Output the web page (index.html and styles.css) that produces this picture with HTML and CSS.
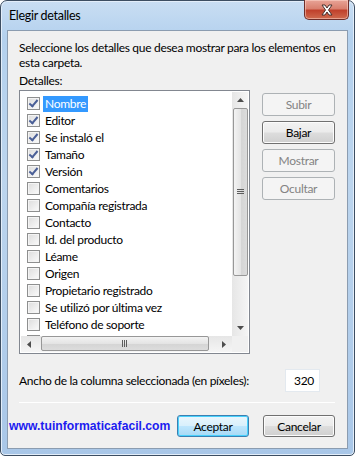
FILE: index.html
```html
<!doctype html>
<html lang="es">
  <head>
    <meta charset="UTF-8" />
    <title>Elegir detalles</title>
    <link rel="stylesheet" href="styles.css">
  </head>
  <body>
    <div class="window">
      <div class="titlebar">
        <span class="title">Elegir detalles</span>
        <div class="close-btn">
          <svg width="14" height="12" viewBox="0 0 14 12">
            <path d="M2 1h3l2 3 2-3h3l-3.5 5 3.5 5h-3l-2-3-2 3h-3l3.5-5z" fill="#ffffff" stroke="#47322f" stroke-width="1" stroke-linejoin="round" />
          </svg>
        </div>
      </div>
      <div class="client">
        <p class="intro">Seleccione los detalles que desea mostrar para los elementos en esta carpeta.</p>
        <div class="label">Detalles:</div>
        <div class="details-row">
          <div class="listbox">
            <div class="list-area">
              <div class="items">
                <div class="item"><span class="check checked"></span><span class="name selected">Nombre</span></div>
                <div class="item"><span class="check checked"></span><span class="name">Editor</span></div>
                <div class="item"><span class="check checked"></span><span class="name">Se instaló el</span></div>
                <div class="item"><span class="check checked"></span><span class="name">Tamaño</span></div>
                <div class="item"><span class="check checked"></span><span class="name">Versión</span></div>
                <div class="item"><span class="check"></span><span class="name">Comentarios</span></div>
                <div class="item"><span class="check"></span><span class="name">Compañía registrada</span></div>
                <div class="item"><span class="check"></span><span class="name">Contacto</span></div>
                <div class="item"><span class="check"></span><span class="name">Id. del producto</span></div>
                <div class="item"><span class="check"></span><span class="name">Léame</span></div>
                <div class="item"><span class="check"></span><span class="name">Origen</span></div>
                <div class="item"><span class="check"></span><span class="name">Propietario registrado</span></div>
                <div class="item"><span class="check"></span><span class="name">Se utilizó por última vez</span></div>
                <div class="item"><span class="check"></span><span class="name">Teléfono de soporte</span></div>
                <div class="item"><span class="check"></span></div>
              </div>
              <div class="vscroll">
                <div class="arrow">
                  <svg width="7" height="4" viewBox="0 0 7 4"><path d="M0 4L3.5 0 7 4z" fill="#4d4d4d" /></svg>
                </div>
                <div class="vtrack">
                  <div class="vthumb">
                    <svg width="7" height="6" viewBox="0 0 7 6"><path d="M0 .5h7M0 2.5h7M0 4.5h7" stroke="#5c5c5c" /></svg>
                  </div>
                </div>
                <div class="arrow">
                  <svg width="7" height="4" viewBox="0 0 7 4"><path d="M0 0L3.5 4 7 0z" fill="#4d4d4d" /></svg>
                </div>
              </div>
            </div>
            <div class="hscroll">
              <div class="harrow">
                <svg width="4" height="7" viewBox="0 0 4 7"><path d="M4 0L0 3.5 4 7z" fill="#4d4d4d" /></svg>
              </div>
              <div class="htrack">
                <div class="hthumb">
                  <svg width="6" height="7" viewBox="0 0 6 7"><path d="M.5 0v7M2.5 0v7M4.5 0v7" stroke="#5c5c5c" /></svg>
                </div>
              </div>
              <div class="harrow">
                <svg width="4" height="7" viewBox="0 0 4 7"><path d="M0 0L4 3.5 0 7z" fill="#4d4d4d" /></svg>
              </div>
              <div class="corner"></div>
            </div>
          </div>
          <div class="side-buttons">
            <button class="btn" disabled>Subir</button>
            <button class="btn">Bajar</button>
            <button class="btn" disabled>Mostrar</button>
            <button class="btn" disabled>Ocultar</button>
          </div>
        </div>
        <div class="width-row">
          <span>Ancho de la columna seleccionada (en píxeles):</span>
          <div class="width-input">320</div>
        </div>
        <div class="separator"></div>
        <div class="footer">
          <span class="site">www.tuinformaticafacil.com</span>
          <button class="btn default">Aceptar</button>
          <button class="btn">Cancelar</button>
        </div>
      </div>
    </div>
  </body>
</html>
```

FILE: styles.css
```css
* {
  margin: 0;
  padding: 0;
  box-sizing: border-box;
}

body {
  width: 355px;
  height: 456px;
  overflow: hidden;
  background: #ffffff;
  font-family: 'Lato', 'Noto Sans', sans-serif;
  font-size: 12px;
  letter-spacing: -0.3px;
  color: #000000;
}

.window {
  width: 355px;
  height: 456px;
  border: 1px solid #3d4e62;
  border-radius: 7px 7px 5px 5px;
  background: linear-gradient(180deg, #c9def3 0%, #b4d1ee 8%, #bcd5ee 40%, #a9c7e8 100%);
  display: flex;
  flex-direction: column;
  box-shadow: inset 0 0 0 1px #e3eefa;
}

.titlebar {
  height: 29px;
  display: flex;
  align-items: flex-start;
  justify-content: space-between;
  padding-left: 8px;
}

.title {
  font-size: 12.5px;
  line-height: 14px;
  margin-top: 8px;
  color: #000000;
}

.close-btn {
  width: 45px;
  height: 20px;
  margin-right: 5px;
  margin-top: -1px;
  border: 1px solid #6e2e2a;
  border-top: none;
  border-radius: 0 0 5px 5px;
  background: linear-gradient(180deg, #e8a497 0%, #d9806f 45%, #c0412c 55%, #cf6a4e 100%);
  box-shadow: inset 0 0 0 1px rgba(255, 220, 210, 0.5);
  display: flex;
  align-items: center;
  justify-content: center;
}

.client {
  flex: 1;
  margin: 0 6px 6px 6px;
  border: 1px solid #8b9cb0;
  background: #f0f0f0;
  padding: 9px 12px 0 11px;
}

.intro {
  line-height: 15px;
  width: 318px;
}

.label {
  margin-top: 3px;
  line-height: 15px;
}

.details-row {
  display: flex;
  gap: 12px;
  margin-top: 2px;
}

.listbox {
  width: 234px;
  height: 264px;
  border: 1px solid #828790;
  background: #ffffff;
  padding: 1px;
  display: flex;
  flex-direction: column;
}

.list-area {
  flex: 1;
  display: flex;
  overflow: hidden;
}

.items {
  flex: 1;
  padding: 3px 0 0 6px;
  overflow: hidden;
}

.item {
  height: 17px;
  display: flex;
  align-items: center;
  white-space: nowrap;
}

.check {
  width: 13px;
  height: 13px;
  border: 1px solid #8e8f8f;
  background: linear-gradient(135deg, #dcdcdc, #fbfbfb);
  box-shadow: inset 0 0 0 1px #f4f4f4;
  margin-right: 3px;
  flex-shrink: 0;
  position: relative;
}

.check.checked::after {
  content: '';
  position: absolute;
  left: 3px;
  top: 0px;
  width: 3px;
  height: 7px;
  border: solid #4a5f97;
  border-width: 0 2px 2px 0;
  transform: rotate(40deg);
}

.name {
  padding: 0 2px;
  line-height: 16px;
}

.name.selected {
  background: #3399ff;
  color: #ffffff;
}

.vscroll {
  width: 16px;
  display: flex;
  flex-direction: column;
  background: linear-gradient(90deg, #e6e6e6, #f5f5f5);
}

.arrow {
  height: 16px;
  display: flex;
  align-items: center;
  justify-content: center;
}

.vtrack {
  flex: 1;
}

.vthumb {
  height: 168px;
  margin: 0 0 0 1px;
  border: 1px solid #979797;
  border-radius: 2px;
  background: linear-gradient(90deg, #f3f3f3, #e4e4e4 50%, #d4d4d4 51%, #dcdcdc);
  display: flex;
  align-items: center;
  justify-content: center;
}

.hscroll {
  height: 16px;
  display: flex;
  background: linear-gradient(180deg, #e6e6e6, #f5f5f5);
}

.harrow {
  width: 16px;
  display: flex;
  align-items: center;
  justify-content: center;
}

.htrack {
  flex: 1;
}

.hthumb {
  width: 168px;
  height: 15px;
  margin-left: 4px;
  border: 1px solid #979797;
  border-radius: 2px;
  background: linear-gradient(180deg, #f3f3f3, #e4e4e4 50%, #d4d4d4 51%, #dcdcdc);
  display: flex;
  align-items: center;
  justify-content: center;
}

.corner {
  width: 16px;
  background: #f0f0f0;
}

.side-buttons {
  display: flex;
  flex-direction: column;
  gap: 5px;
  padding-top: 3px;
}

.btn {
  width: 73px;
  height: 23px;
  font-family: inherit;
  font-size: 12px;
  letter-spacing: -0.3px;
  color: #000000;
  border: 1px solid #707070;
  border-radius: 3px;
  background: linear-gradient(180deg, #f2f2f2 0%, #ebebeb 48%, #dddddd 52%, #cfcfcf 100%);
  box-shadow: inset 0 0 0 1px #fcfcfc;
}

.btn:disabled {
  color: #838383;
  border-color: #adb2b5;
  background: #f4f4f4;
  box-shadow: none;
}

.btn.default {
  border-color: #3c7fb1;
  box-shadow: inset 0 0 0 1px #48d1fc;
  background: linear-gradient(180deg, #eaf6fd 0%, #d9f0fc 48%, #bee6fd 52%, #a7d9f5 100%);
}

.width-row {
  display: flex;
  align-items: center;
  justify-content: space-between;
  margin-top: 15px;
  padding-right: 15px;
}

.width-input {
  width: 35px;
  height: 23px;
  background: #ffffff;
  border: 1px solid #e3e9ef;
  text-align: right;
  padding-right: 5px;
  line-height: 21px;
}

.separator {
  margin: 10px 1px 0 0;
  height: 1px;
  background: #a0a0a0;
  border-bottom: 1px solid #ffffff;
  width: 316px;
}

.footer {
  display: flex;
  align-items: center;
  gap: 14px;
  margin-top: 12px;
  margin-left: -10px;
}

.site {
  font-family: 'Liberation Sans', Arial, sans-serif;
  font-weight: bold;
  font-size: 12.2px;
  letter-spacing: 0;
  color: #1c1cf0;
  width: 160px;
  margin-right: -6px;
}

.footer .btn {
  width: 72px;
  height: 22px;
}
```
